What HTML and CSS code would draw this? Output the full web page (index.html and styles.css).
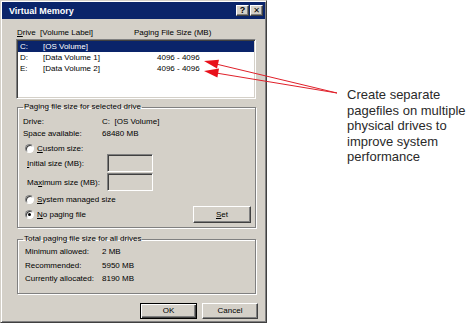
FILE: index.html
```html
<!DOCTYPE html>
<html>
<head>
<meta charset="utf-8">
<link rel="stylesheet" href="styles.css">
</head>
<body>
<div class="page">
  <div class="dialog">
    <div class="titlebar">
      <span class="title">Virtual Memory</span>
      <div class="tbtns"><span class="tbtn">?</span><span class="tbtn close">✕</span></div>
    </div>
    <div class="inner">
      <div class="colheads"><span class="ch1"><u>D</u>rive&nbsp; [Volume Label]</span><span class="ch2">Paging File Size (MB)</span></div>
      <div class="listbox">
        <div class="lrow sel"><span class="ld">C:</span><span class="ll">[OS Volume]</span><span class="ls"></span></div>
        <div class="lrow"><span class="ld">D:</span><span class="ll">[Data Volume 1]</span><span class="ls">4096 - 4096</span></div>
        <div class="lrow"><span class="ld">E:</span><span class="ll">[Data Volume 2]</span><span class="ls">4096 - 4096</span></div>
      </div>
      <fieldset class="group g1">
        <legend>Paging file size for selected drive</legend>
        <div class="kv"><span class="k">Drive:</span><span>C:&nbsp; [OS Volume]</span></div>
        <div class="kv"><span class="k">Space available:</span><span>68480 MB</span></div>
        <div class="radiorow custom"><span class="radio"></span><span><u>C</u>ustom size:</span></div>
        <div class="fieldrow first"><span class="fl"><u>I</u>nitial size (MB):</span><span class="tbox"></span></div>
        <div class="fieldrow"><span class="fl">Ma<u>x</u>imum size (MB):</span><span class="tbox"></span></div>
        <div class="radiorow sys"><span class="radio"></span><span><u>S</u>ystem managed size</span></div>
        <div class="lastrow">
          <div class="radiorow"><span class="radio on"></span><span><u>N</u>o paging file</span></div>
          <span class="btn set"><u>S</u>et</span>
        </div>
      </fieldset>
      <fieldset class="group g2">
        <legend>Total paging file size for all drives</legend>
        <div class="kv2"><span class="k2">Minimum allowed:</span><span>2 MB</span></div>
        <div class="kv2"><span class="k2">Recommended:</span><span>5950 MB</span></div>
        <div class="kv2"><span class="k2">Currently allocated:</span><span>8190 MB</span></div>
      </fieldset>
      <div class="buttons">
        <span class="btn ok">OK</span>
        <span class="btn cancel">Cancel</span>
      </div>
    </div>
  </div>
  <div class="note">Create separate<br>pagefiles on multiple<br>physical drives to<br>improve system<br>performance</div>
  <svg class="arrows" width="474" height="327" viewBox="0 0 474 327">
    <line x1="337" y1="93" x2="216" y2="64" stroke="#e0202a" stroke-width="1"/>
    <line x1="337" y1="93" x2="216" y2="73" stroke="#e0202a" stroke-width="1"/>
    <polygon points="204,61 219,59.8 217,68.5" fill="#e8101a"/>
    <polygon points="204,71 219,68.6 217.4,77.4" fill="#e8101a"/>
  </svg>
</div>
</body>
</html>
```
FILE: styles.css
```css
* { box-sizing: border-box; }
body {
  margin: 0;
  background: #fff;
  font-family: "Liberation Sans", Arial, sans-serif;
}
.page {
  position: relative;
  display: flex;
  align-items: flex-start;
  width: 474px;
  height: 327px;
  overflow: hidden;
}
.dialog {
  width: 267px;
  height: 323px;
  flex: none;
  background: #d4d0c8;
  border: 1px solid;
  border-color: #d4d0c8 #404040 #404040 #d4d0c8;
  box-shadow: inset 1px 1px 0 #fff, inset -1px -1px 0 #808080;
  padding: 1px 1px 0 1px;
  font-size: 8px;
  color: #000;
}
.titlebar {
  height: 17px;
  background: #0a246a;
  display: flex;
  align-items: center;
  justify-content: space-between;
  padding: 0 2px 0 7px;
  color: #fff;
  font-weight: bold;
  font-size: 9px;
}
.tbtns { display: flex; gap: 1px; }
.tbtn {
  width: 13px;
  height: 11px;
  background: #d4d0c8;
  border: 1px solid;
  border-color: #fff #404040 #404040 #fff;
  box-shadow: inset -1px -1px 0 #808080;
  color: #000;
  font-size: 9px;
  line-height: 9px;
  text-align: center;
  font-weight: bold;
}
.tbtn.close {
  font-family: "DejaVu Sans", sans-serif;
  font-size: 8px;
}
.inner {
  margin-left: 14px;
  width: 240px;
}
.colheads {
  margin-top: 9px;
  height: 10px;
  line-height: 10px;
  display: flex;
  padding-left: 1px;
  white-space: nowrap;
}
.ch1 { width: 117px; }
.listbox {
  margin-top: 1px;
  height: 60px;
  background: #fff;
  border: 1px solid;
  border-color: #808080 #fff #fff #808080;
  box-shadow: inset 1px 1px 0 #404040, inset -1px -1px 0 #d4d0c8;
  padding: 1px;
}
.lrow {
  display: flex;
  height: 11px;
  line-height: 11px;
  padding-left: 2px;
  white-space: nowrap;
}
.lrow.sel { background: #0a246a; color: #fff; }
.ld { width: 23px; }
.ll { width: 114px; }
.group {
  margin: 3px 0 0 1px;
  width: 239px;
  min-width: 0;
  border: 1px solid #808080;
  box-shadow: 1px 1px 0 #fff, inset 1px 1px 0 #fff;
  padding: 4px 4px 4px 5px;
}
.group legend {
  padding: 0 1px;
  line-height: 10px;
  font-size: 8px;
  white-space: nowrap;
}
.kv { display: flex; line-height: 12px; white-space: nowrap; }
.k { width: 79px; }
.radiorow {
  display: flex;
  align-items: center;
  line-height: 11px;
  height: 11px;
  padding-left: 2px;
  white-space: nowrap;
}
.radiorow.custom { margin-top: 3px; }
.radiorow.sys { margin-top: 2px; height: 12px; }
.radio {
  width: 9px;
  height: 9px;
  border-radius: 50%;
  margin-right: 3px;
  background: #fff;
  border: 1px solid;
  border-color: #808080 #fff #fff #808080;
  box-shadow: inset 1px 1px 0 #404040;
  display: flex;
  align-items: center;
  justify-content: center;
}
.radio.on::after {
  content: "";
  width: 3px;
  height: 3px;
  border-radius: 50%;
  background: #000;
}
.fieldrow {
  display: flex;
  align-items: center;
  height: 18px;
  margin-top: 1px;
  padding-left: 4px;
  white-space: nowrap;
}
.fieldrow.first { margin-top: 0; }
.fl { width: 80px; }
.tbox {
  width: 46px;
  height: 18px;
  background: #d4d0c8;
  border: 1px solid;
  border-color: #808080 #fff #fff #808080;
  box-shadow: inset 1px 1px 0 #404040, inset -1px -1px 0 #d4d0c8;
}
.lastrow {
  display: flex;
  align-items: center;
  justify-content: space-between;
  height: 17px;
  margin-top: 1px;
}
.btn {
  display: flex;
  align-items: center;
  justify-content: center;
  background: #d4d0c8;
  border: 1px solid;
  border-color: #fff #404040 #404040 #fff;
  box-shadow: inset -1px -1px 0 #808080;
  color: #000;
  font-size: 8px;
}
.btn.set { width: 58px; height: 17px; }
.g2 { margin-top: 6px; padding: 1px 4px 7px 5px; }
.kv2 { display: flex; line-height: 13.5px; padding-left: 2px; white-space: nowrap; }
.k2 { width: 77px; }
.buttons {
  display: flex;
  justify-content: flex-end;
  gap: 5px;
  margin-top: 9px;
  width: 242px;
}
.btn.ok {
  width: 57px;
  height: 16px;
  border: 1px solid #000;
  box-shadow: inset 1px 1px 0 #fff, inset -1px -1px 0 #404040, inset -2px -2px 0 #808080;
}
.btn.cancel { width: 56px; height: 16px; }
.note {
  margin: 87px 0 0 80px;
  font-size: 13px;
  line-height: 15.5px;
  color: #2a2a2a;
  white-space: nowrap;
}
.arrows {
  position: absolute;
  left: 0;
  top: 0;
  pointer-events: none;
}
```
